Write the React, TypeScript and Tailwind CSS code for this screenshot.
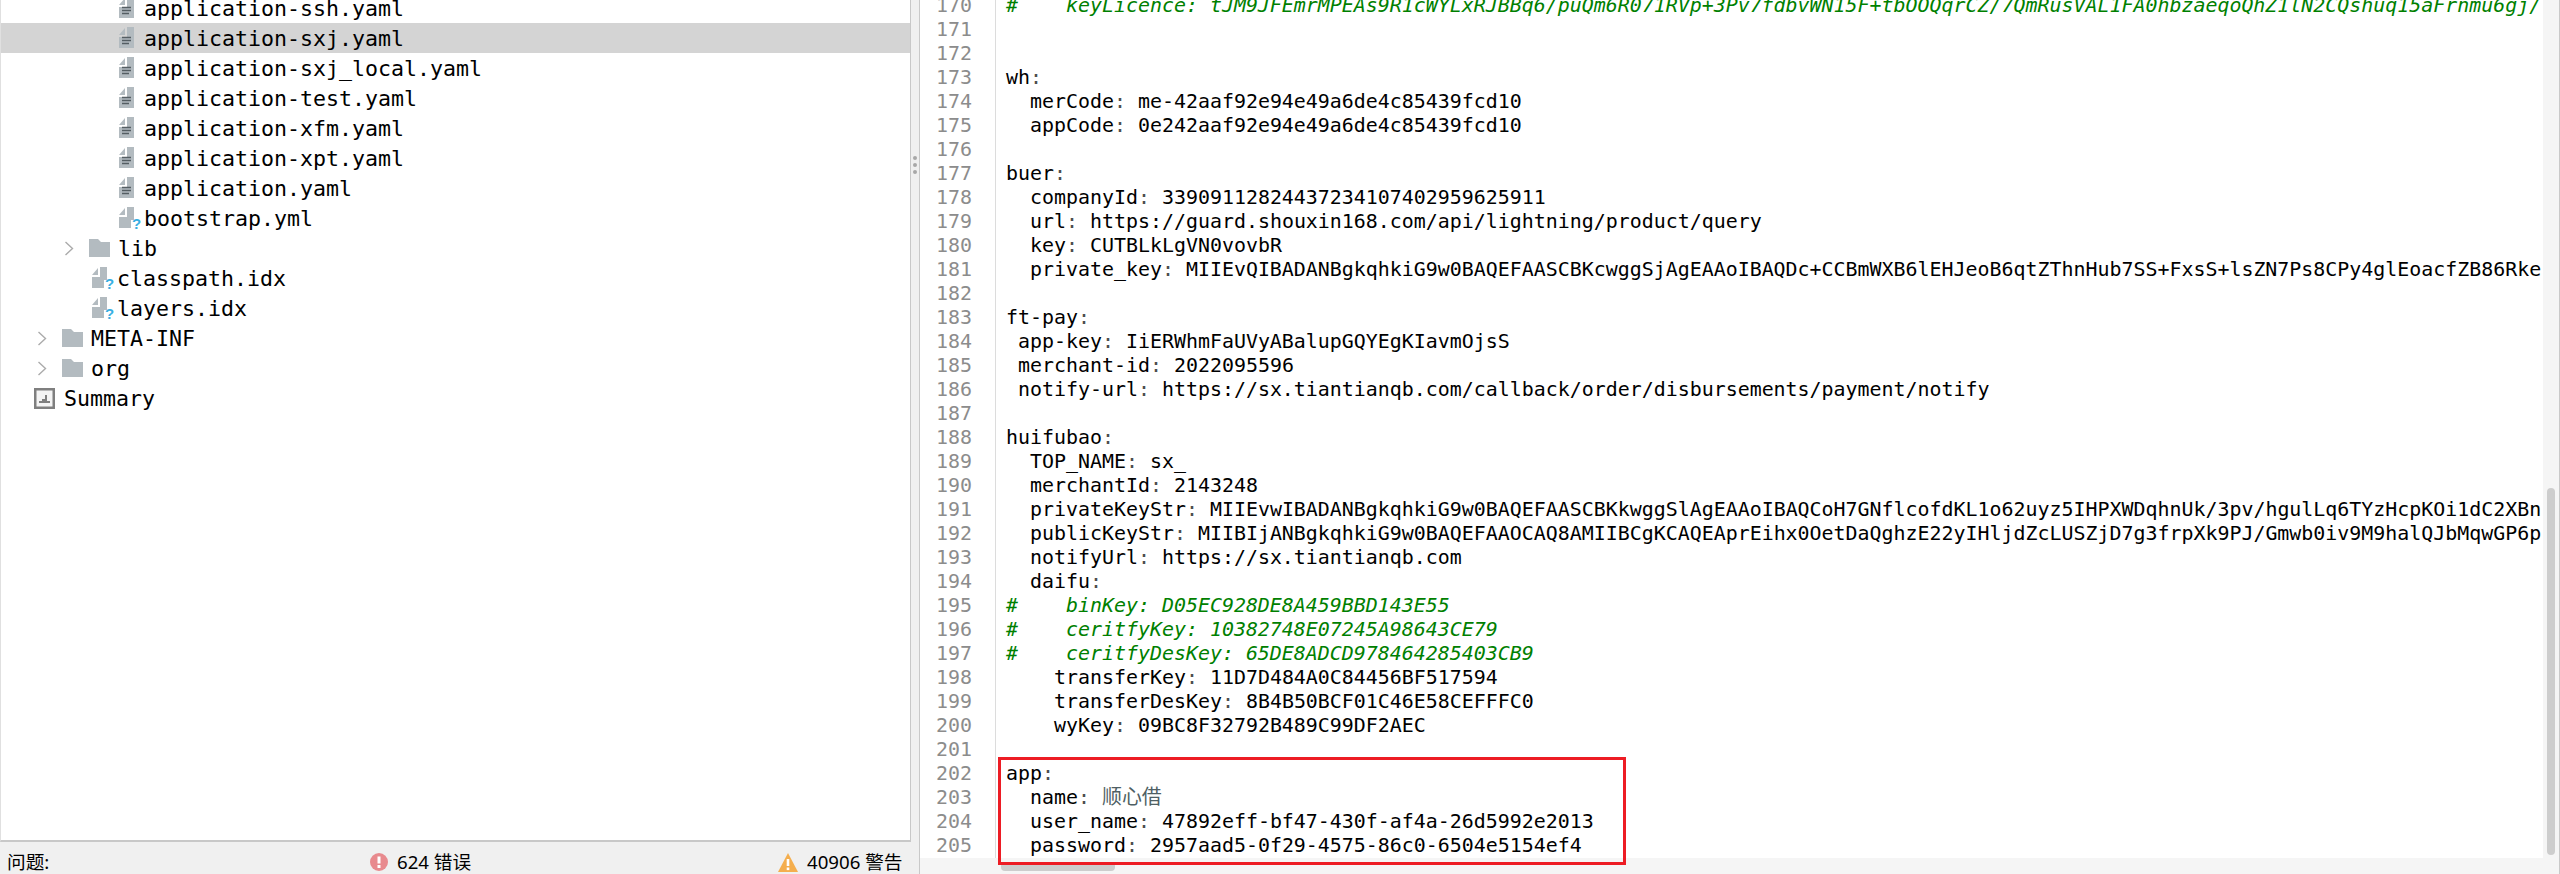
const mono = "font-['DejaVu_Sans_Mono','Liberation_Mono','Noto_Sans_CJK_SC',monospace]";

type TreeItem = {
  name: string;
  kind: "yaml" | "unknown" | "folder" | "summary";
  level: 0 | 1 | 2 | 3;
  selected?: boolean;
};

const tree: TreeItem[] = [
  { name: "application-ssh.yaml", kind: "yaml", level: 3 },
  { name: "application-sxj.yaml", kind: "yaml", level: 3, selected: true },
  { name: "application-sxj_local.yaml", kind: "yaml", level: 3 },
  { name: "application-test.yaml", kind: "yaml", level: 3 },
  { name: "application-xfm.yaml", kind: "yaml", level: 3 },
  { name: "application-xpt.yaml", kind: "yaml", level: 3 },
  { name: "application.yaml", kind: "yaml", level: 3 },
  { name: "bootstrap.yml", kind: "unknown", level: 3 },
  { name: "lib", kind: "folder", level: 2 },
  { name: "classpath.idx", kind: "unknown", level: 2 },
  { name: "layers.idx", kind: "unknown", level: 2 },
  { name: "META-INF", kind: "folder", level: 1 },
  { name: "org", kind: "folder", level: 1 },
  { name: "Summary", kind: "summary", level: 0 },
];

const code: string[] = [
  "#    keyLicence: tJM9JFEmrMPEAs9R1cWYLxRJBBq6/puQm6R071RVp+3Pv7fdbvWN15F+tbOOQqrCZ/7QmRusVAL1FA0hbzaeqoQhZ1lN2CQshuq15aFrnmu6gj/",
  "",
  "",
  "wh:",
  "  merCode: me-42aaf92e94e49a6de4c85439fcd10",
  "  appCode: 0e242aaf92e94e49a6de4c85439fcd10",
  "",
  "buer:",
  "  companyId: 33909112824437234107402959625911",
  "  url: https://guard.shouxin168.com/api/lightning/product/query",
  "  key: CUTBLkLgVN0vovbR",
  "  private_key: MIIEvQIBADANBgkqhkiG9w0BAQEFAASCBKcwggSjAgEAAoIBAQDc+CCBmWXB6lEHJeoB6qtZThnHub7SS+FxsS+lsZN7Ps8CPy4glEoacfZB86Rke",
  "",
  "ft-pay:",
  " app-key: IiERWhmFaUVyABalupGQYEgKIavmOjsS",
  " merchant-id: 2022095596",
  " notify-url: https://sx.tiantianqb.com/callback/order/disbursements/payment/notify",
  "",
  "huifubao:",
  "  TOP_NAME: sx_",
  "  merchantId: 2143248",
  "  privateKeyStr: MIIEvwIBADANBgkqhkiG9w0BAQEFAASCBKkwggSlAgEAAoIBAQCoH7GNflcofdKL1o62uyz5IHPXWDqhnUk/3pv/hgulLq6TYzHcpKOi1dC2XBn",
  "  publicKeyStr: MIIBIjANBgkqhkiG9w0BAQEFAAOCAQ8AMIIBCgKCAQEAprEihx0OetDaQghzE22yIHljdZcLUSZjD7g3frpXk9PJ/Gmwb0iv9M9halQJbMqwGP6p",
  "  notifyUrl: https://sx.tiantianqb.com",
  "  daifu:",
  "#    binKey: D05EC928DE8A459BBD143E55",
  "#    ceritfyKey: 10382748E07245A98643CE79",
  "#    ceritfyDesKey: 65DE8ADCD978464285403CB9",
  "    transferKey: 11D7D484A0C84456BF517594",
  "    transferDesKey: 8B4B50BCF01C46E58CEFFFC0",
  "    wyKey: 09BC8F32792B489C99DF2AEC",
  "",
  "app:",
  "  name: 顺心借",
  "  user_name: 47892eff-bf47-430f-af4a-26d5992e2013",
  "  password: 2957aad5-0f29-4575-86c0-6504e5154ef4",
];

function FileIcon({ unknown }: { unknown?: boolean }) {
  return (
    <svg width="26" height="24" viewBox="0 0 26 24" className="shrink-0">
      <path d="M0 9 L6 2 L6 9 Z" fill="#b3bbc0" />
      <path d="M8 1 H15 V22 H0 V11 H8 Z" fill="#b3bbc0" />
      {unknown ? (
        <>
          <path d="M12 14 H20 V24 H12 Z" fill="#ffffff" />
          <text x="13" y="23" fontSize="15" fontWeight="700" fill="#38aee2" fontFamily="Liberation Sans, sans-serif">?</text>
        </>
      ) : (
        <path d="M3 11.5 H12 M3 14.5 H12 M3 17.5 H10" stroke="#555e63" strokeWidth="1.3" />
      )}
    </svg>
  );
}

function FolderIcon() {
  return (
    <svg width="21" height="18" viewBox="0 0 21 18" className="shrink-0">
      <path d="M0 0 H9 L12 3 H21 V18 H0 Z" fill="#b3bbc0" />
    </svg>
  );
}

function Chevron() {
  return (
    <svg width="10" height="15" viewBox="0 0 10 15" className="shrink-0">
      <path d="M1.5 1 L8.5 7.5 L1.5 14" fill="none" stroke="#ababab" strokeWidth="1.4" />
    </svg>
  );
}

function SummaryIcon() {
  return (
    <svg width="21" height="21" viewBox="0 0 21 21" className="shrink-0">
      <rect x="1.25" y="1.25" width="18.5" height="18.5" fill="#f4f4f4" stroke="#7f7f7f" strokeWidth="2.5" />
      <path d="M5 15 H16 V13 H13 V7 H11 V11 H8 V13 H5 Z" fill="#7f7f7f" />
    </svg>
  );
}

function TreeRow({ item }: { item: TreeItem }) {
  const bg = item.selected ? "bg-[#d4d4d4]" : "";
  if (item.kind === "folder") {
    const pad = item.level === 2 ? "pl-[63px]" : "pl-[36px]";
    return (
      <div className={`flex h-[30px] items-center ${pad} ${bg}`}>
        <Chevron />
        <span className="ml-[15px] flex w-[29px] shrink-0"><FolderIcon /></span>
        <span className="pt-[2px]">{item.name}</span>
      </div>
    );
  }
  if (item.kind === "summary") {
    return (
      <div className="flex h-[30px] items-center pl-[33px]">
        <span className="flex w-[30px] shrink-0"><SummaryIcon /></span>
        <span className="pt-[2px]">{item.name}</span>
      </div>
    );
  }
  const pad = item.level === 3 ? "pl-[118px]" : "pl-[91px]";
  return (
    <div className={`flex h-[30px] items-center ${pad} ${bg}`}>
      <FileIcon unknown={item.kind === "unknown"} />
      <span className="-ml-[1px] pt-[2px]">{item.name}</span>
    </div>
  );
}

function CodeLine({ text }: { text: string }) {
  if (text.startsWith("#")) {
    return <div className="h-6 whitespace-pre italic text-[#008000]">{text}</div>;
  }
  const i = text.indexOf(":");
  if (i < 0) return <div className="h-6 whitespace-pre">{text}</div>;
  const value = text.slice(i + 1);
  return (
    <div className="h-6 whitespace-pre text-black">
      {text.slice(0, i)}
      <span className="text-[#4d4d4d]">:</span>
      {value === " 顺心借" ? <span className="text-[#4f5f64]">{value}</span> : value}
    </div>
  );
}

export default function App() {
  return (
    <div className="flex h-[874px] w-[2560px] overflow-hidden bg-white">
      {/* left side: project tree + problems bar */}
      <div className="flex w-[920px] shrink-0 flex-col border-r border-[#c9c9c9] bg-[#f0f0f0]">
        <div className="flex h-[842px] shrink-0">
          <div className={`w-[911px] shrink-0 overflow-hidden border-r border-b-2 border-l border-[#c8c8c8] border-l-[#e0e0e0] bg-white text-[21.6px] leading-[30px] text-black ${mono}`}>
            <div className="-mt-[7px]">
              {tree.map((item) => (
                <TreeRow key={item.name} item={item} />
              ))}
            </div>
          </div>
          <div className="flex flex-1 flex-col items-center gap-[3px] pt-[156px]">
            <span className="h-[4px] w-[4px] rounded-full bg-[#a8a8a8]" />
            <span className="h-[4px] w-[4px] rounded-full bg-[#a8a8a8]" />
            <span className="h-[4px] w-[4px] rounded-full bg-[#a8a8a8]" />
          </div>
        </div>
        <div className="flex flex-1 items-center pt-[8px] pl-[7px] font-['Noto_Sans','Noto_Sans_CJK_SC',sans-serif] text-[18.67px] leading-none text-black">
          <span className="w-[363px] shrink-0">问题:</span>
          <span className="flex w-[408px] shrink-0 items-center">
            <svg width="18" height="18" viewBox="0 0 18 18" className="mr-[9px] shrink-0">
              <circle cx="9" cy="9" r="9" fill="#e88a8e" />
              <rect x="7.5" y="3.5" width="3" height="7" fill="#ffffff" />
              <rect x="7.5" y="12" width="3" height="3" fill="#ffffff" />
            </svg>
            624 错误
          </span>
          <span className="flex items-center whitespace-nowrap">
            <svg width="20" height="19" viewBox="0 0 20 19" className="mr-[9px] shrink-0">
              <path d="M10 0 L20 19 H0 Z" fill="#f4ae4e" />
              <rect x="8.7" y="6" width="2.6" height="7" fill="#ffffff" />
              <rect x="8.7" y="14.5" width="2.6" height="2.6" fill="#ffffff" />
            </svg>
            40906 警告
          </span>
        </div>
      </div>

      {/* right side: editor */}
      <div className="flex min-w-0 flex-1 flex-col border-r border-[#c9c9c9] bg-[#f5f5f5]">
        <div className="relative flex h-[858px] shrink-0">
          <div className={`flex min-w-0 flex-1 overflow-hidden bg-white text-[19.93px] leading-6 ${mono}`}>
            <div className="-mt-[6px] h-[864px] w-[76px] shrink-0 border-r border-[#dcdcdc] pr-[23px] text-right text-[#8c8c8c]">
              {code.map((_, i) => (
                <div key={i} className="h-6">{170 + i}</div>
              ))}
            </div>
            <div className="-mt-[6px] min-w-0 flex-1 overflow-hidden pl-[10px]">
              {code.map((line, i) => (
                <CodeLine key={i} text={line} />
              ))}
            </div>
          </div>
          <div className="w-[16px] shrink-0 bg-[#f5f5f5] px-[4px] pt-[488px] pb-[3px]">
            <div className="h-full rounded-[4px] bg-[#cdcdcd]" />
          </div>
          {/* red annotation box */}
          <div className="absolute top-[757px] left-[78px] h-[108px] w-[628px] border-[3px] border-[#ed1c24]" />
        </div>
        <div className="flex-1 pt-[4px] pl-[81px]">
          <div className="h-[9px] w-[114px] rounded-[4px] bg-[#cdcdcd]" />
        </div>
      </div>
    </div>
  );
}
